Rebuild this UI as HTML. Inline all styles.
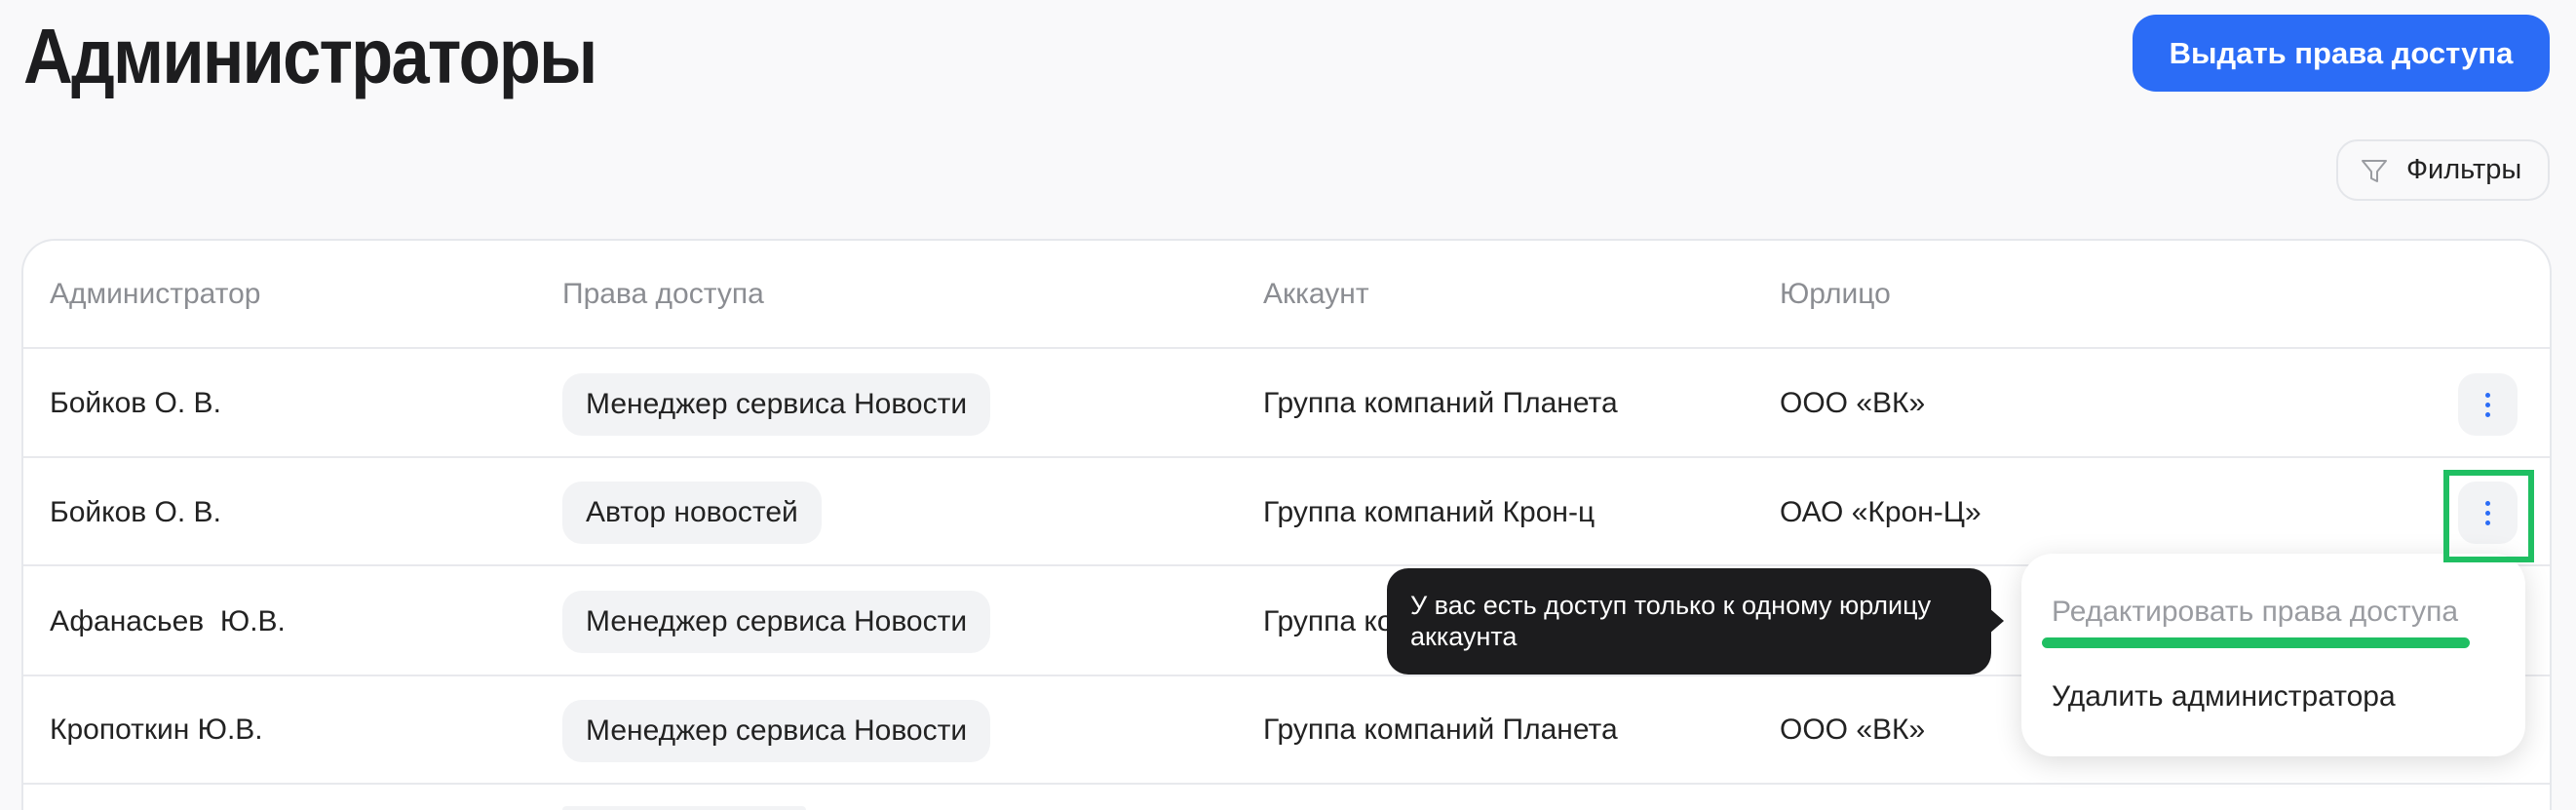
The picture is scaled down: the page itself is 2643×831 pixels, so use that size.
<!DOCTYPE html>
<html style="width:2643px;height:831px;overflow:hidden"><head><meta charset="utf-8"><style>
*{box-sizing:border-box;margin:0;padding:0}
body{width:2643px;height:831px;background:#f9f9fa;font-family:"Liberation Sans","DejaVu Sans",sans-serif;position:relative;overflow:hidden;color:#222}
.a{position:absolute}
h1{position:absolute;left:24px;top:12px;font-size:80px;font-weight:bold;color:#1d1d1f;letter-spacing:-2px;transform:scaleX(0.88);transform-origin:left top;white-space:nowrap}
.btn{left:2188px;top:15px;width:428px;height:79px;background:#2b6cf6;border-radius:24px;color:#fff;font-size:31px;font-weight:bold;display:flex;align-items:center;justify-content:center}
.flt{left:2397px;top:143px;width:219px;height:63px;border:2px solid #e4e6ea;border-radius:22px;font-size:29px;display:flex;align-items:center;padding-left:70px;color:#222}
.card{left:22px;top:245px;width:2596px;height:586px;background:#fff;border:2px solid #e6e8ec;border-bottom:none;border-radius:34px 34px 0 0}
.hd{font-size:30px;color:#8b8d92}
.t{font-size:30px;color:#222}
.line{left:24px;width:2592px;height:2px;background:#e8e9ed}
.chip{height:64px;background:#f2f3f5;border-radius:20px;font-size:30px;display:flex;align-items:center;padding:0 24px;left:577px}
.keb{left:2522px;width:61px;height:64px;background:#f2f3f5;border-radius:18px}
.keb i{position:absolute;left:28px;width:5px;height:5px;border-radius:50%;background:#2b6cf6}
#w{position:absolute;left:0;top:0;width:2643px;height:831px;overflow:hidden}
</style></head><body><div id="w">
<h1>Администраторы</h1>
<div class="a btn">Выдать права доступа</div>
<div class="a flt"><svg class="a" style="left:22px;top:16px" width="30" height="30" viewBox="0 0 30 30"><path d="M3 4h24l-9 11v10l-6-3v-7z" fill="none" stroke="#9a9ca1" stroke-width="2" stroke-linejoin="round"/></svg>Фильтры</div>
<div class="a card"></div>
<div class="a hd" style="left:51px;top:285px">Администратор</div>
<div class="a hd" style="left:577px;top:285px">Права доступа</div>
<div class="a hd" style="left:1296px;top:285px">Аккаунт</div>
<div class="a hd" style="left:1826px;top:285px">Юрлицо</div>
<div class="a line" style="top:356px"></div>
<div class="a line" style="top:468px"></div>
<div class="a line" style="top:579px"></div>
<div class="a line" style="top:692px"></div>
<div class="a line" style="top:803px"></div>

<div class="a t" style="left:51px;top:397px">Бойков О. В.</div>
<div class="a chip" style="top:383px">Менеджер сервиса Новости</div>
<div class="a t" style="left:1296px;top:397px">Группа компаний Планета</div>
<div class="a t" style="left:1826px;top:397px">ООО «ВК»</div>
<div class="a keb" style="top:383px"><i style="top:20px"></i><i style="top:30px"></i><i style="top:40px"></i></div>

<div class="a t" style="left:51px;top:509px">Бойков О. В.</div>
<div class="a chip" style="top:494px">Автор новостей</div>
<div class="a t" style="left:1296px;top:509px">Группа компаний Крон-ц</div>
<div class="a t" style="left:1826px;top:509px">ОАО «Крон-Ц»</div>
<div class="a keb" style="top:494px"><i style="top:20px"></i><i style="top:30px"></i><i style="top:40px"></i></div>

<div class="a t" style="left:51px;top:621px">Афанасьев&nbsp; Ю.В.</div>
<div class="a chip" style="top:606px">Менеджер сервиса Новости</div>
<div class="a t" style="left:1296px;top:621px">Группа компаний Крон-ц</div>

<div class="a t" style="left:51px;top:732px">Кропоткин Ю.В.</div>
<div class="a chip" style="top:718px">Менеджер сервиса Новости</div>
<div class="a t" style="left:1296px;top:732px">Группа компаний Планета</div>
<div class="a t" style="left:1826px;top:732px">ООО «ВК»</div>
<div class="a" style="left:577px;top:827px;width:250px;height:4px;background:#f2f3f5;border-radius:4px 4px 0 0"></div>

<div class="a" style="left:1423px;top:583px;width:620px;height:109px;background:#1c1c1e;border-radius:22px;color:#fff;font-size:27px;line-height:32px;padding:22px 24px">У вас есть доступ только к одному юрлицу аккаунта</div>
<div class="a" style="left:2040px;top:623px;width:0;height:0;border-top:14px solid transparent;border-bottom:14px solid transparent;border-left:16px solid #1c1c1e"></div>

<div class="a" style="left:2074px;top:568px;width:517px;height:208px;background:#fff;border-radius:32px;box-shadow:0 6px 28px rgba(0,0,0,.14)"></div>
<div class="a" style="left:2105px;top:611px;font-size:30px;color:#9a9ca1">Редактировать права доступа</div>
<div class="a" style="left:2095px;top:654px;width:439px;height:11px;background:#1fbf62;border-radius:6px"></div>
<div class="a t" style="left:2105px;top:698px">Удалить администратора</div>
<div class="a" style="left:2507px;top:482px;width:93px;height:95px;border:6px solid #1fbf62"></div>
</div></body></html>
